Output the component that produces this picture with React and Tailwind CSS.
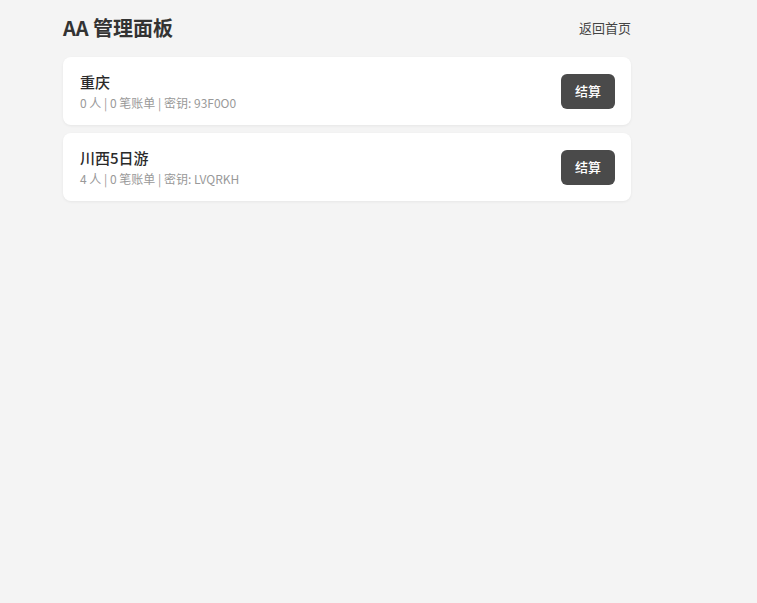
const groups = [
  { name: '重庆', people: 0, bills: 0, key: '93F0O0' },
  { name: '川西5日游', people: 4, bills: 0, key: 'LVQRKH' },
];

export default function App() {
  return (
    <div
      className="min-h-screen bg-[#f4f4f4] text-[#333]"
      style={{ fontFamily: '"Noto Sans CJK SC", "Noto Sans", sans-serif' }}
    >
      <div className="w-[568px] ml-[63px] pt-[14px]">
        <div className="flex items-center justify-between h-[28px] mb-[15px]">
          <h1 className="text-[20px] leading-[28px] font-bold text-[#333]">AA 管理面板</h1>
          <a className="text-[13px] text-[#444] cursor-pointer">返回首页</a>
        </div>

        <div className="flex flex-col gap-2">
          {groups.map((g) => (
            <div
              key={g.key}
              className="bg-white rounded-lg shadow-[0_1px_3px_rgba(0,0,0,0.06)] flex items-center justify-between pl-[17px] pr-4 py-[13px]"
            >
              <div className="pt-px">
                <div className="text-[15px] leading-[22px] font-medium text-[#2a2a2a]">{g.name}</div>
                <div className="mt-px text-[12px] leading-[18px] text-[#999]">
                  {g.people} 人 | {g.bills} 笔账单 | 密钥: {g.key}
                </div>
              </div>
              <button className="w-[54px] h-[35px] rounded-md bg-[#4a4a4a] text-white text-[13px] font-medium">
                结算
              </button>
            </div>
          ))}
        </div>
      </div>
    </div>
  );
}
